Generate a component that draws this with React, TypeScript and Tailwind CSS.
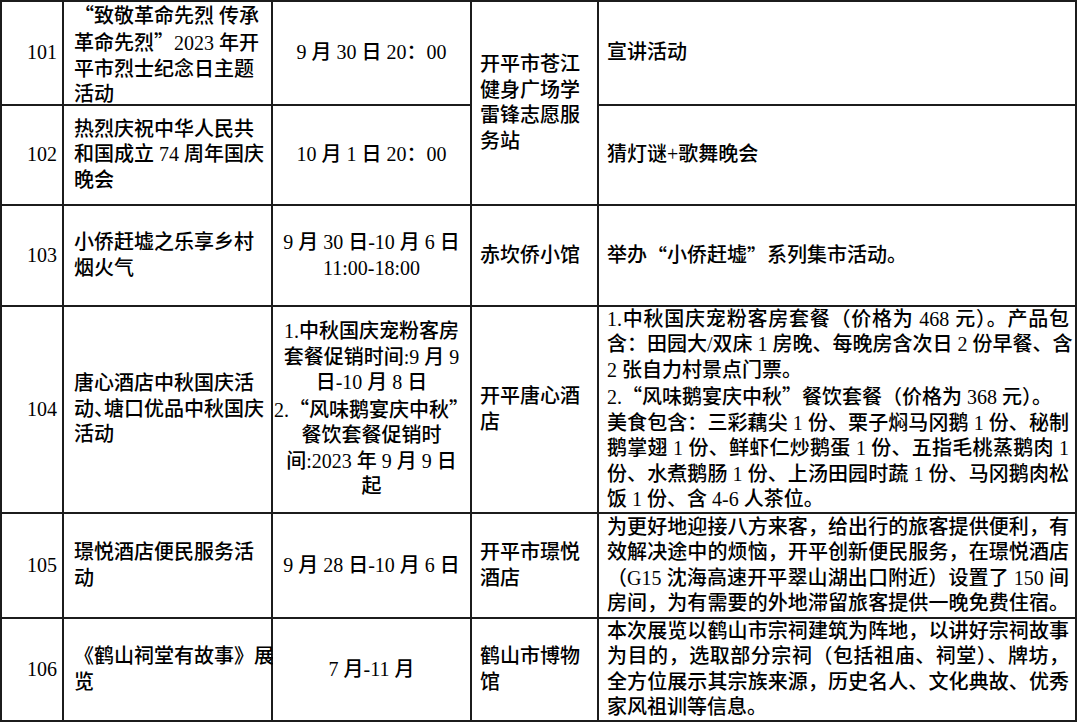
import type { ReactNode } from 'react';
import clsx from 'clsx';

// quotes need the CJK face so they take a full-width box; 、 gets the half-width form
function Txt({ s }: { s: string }) {
  const parts = s.split(/([“”]|、(?=塘))/);
  return (
    <>
      {parts.map((p, i) =>
        p === '“' || p === '”' ? (
          <span key={i} className="font-['Noto_Sans_CJK_SC']">
            {p}
          </span>
        ) : p === '、' ? (
          <span key={i} className="[font-feature-settings:'halt']">
            {p}
          </span>
        ) : (
          p
        ),
      )}
    </>
  );
}

function Lines({
  lines,
  justify = [],
  center = false,
}: {
  lines: string[];
  justify?: number[];
  center?: boolean;
}) {
  return (
    <div className={clsx('w-full', center && 'text-center')}>
      {lines.map((l, i) => (
        <div
          key={i}
          className={clsx(
            'whitespace-nowrap',
            justify.includes(i) && 'whitespace-normal [text-align-last:justify] text-justify',
          )}
        >
          <Txt s={l} />
        </div>
      ))}
    </div>
  );
}

function Cell({ children, className }: { children?: ReactNode; className?: string }) {
  return <div className={clsx('flex items-center bg-white', className)}>{children}</div>;
}

const NUM = 'justify-end pr-[5px]';
const TITLE = 'pl-[10px] pr-[2px]';
const TIME = 'justify-center';
const LOC = 'pl-[8px]';
const DESC = 'pl-[8px] pr-[6px]';

export default function App() {
  return (
    <div className="h-[723px] w-[1080px] overflow-hidden bg-white font-['Liberation_Serif','Noto_Sans_CJK_SC',serif] text-[20px] font-medium leading-[25.5px] text-black">
      <div className="grid w-[1077px] grid-cols-[60px_207px_197px_125px_476px] grid-rows-[102px_98px_99px_205px_103px_101px] gap-[2px] bg-[#1c1c1c] p-[2px]">
        {/* 101 */}
        <Cell className={NUM}>101</Cell>
        <Cell className={clsx(TITLE, 'pt-[3px]')}>
          <Lines lines={['“致敬革命先烈 传承', '革命先烈”2023 年开', '平市烈士纪念日主题', '活动']} />
        </Cell>
        <Cell className={TIME}>9 月 30 日 20：00</Cell>
        <Cell className={clsx(LOC, 'row-span-2')}>
          <Lines lines={['开平市苍江', '健身广场学', '雷锋志愿服', '务站']} />
        </Cell>
        <Cell className={DESC}>宣讲活动</Cell>

        {/* 102 */}
        <Cell className={NUM}>102</Cell>
        <Cell className={TITLE}>
          <Lines lines={['热烈庆祝中华人民共', '和国成立 74 周年国庆', '晚会']} />
        </Cell>
        <Cell className={TIME}>10 月 1 日 20：00</Cell>
        <Cell className={DESC}>猜灯谜+歌舞晚会</Cell>

        {/* 103 */}
        <Cell className={NUM}>103</Cell>
        <Cell className={TITLE}>
          <Lines lines={['小侨赶墟之乐享乡村', '烟火气']} />
        </Cell>
        <Cell className={TIME}>
          <Lines center lines={['9 月 30 日-10 月 6 日', '11:00-18:00']} />
        </Cell>
        <Cell className={LOC}>赤坎侨小馆</Cell>
        <Cell className={DESC}>
          <Txt s="举办“小侨赶墟”系列集市活动。" />
        </Cell>

        {/* 104 */}
        <Cell className={NUM}>104</Cell>
        <Cell className={TITLE}>
          <Lines lines={['唐心酒店中秋国庆活', '动、塘口优品中秋国庆', '活动']} />
        </Cell>
        <Cell className={TIME}>
          <Lines
            center
            lines={[
              '1.中秋国庆宠粉客房',
              '套餐促销时间:9 月 9',
              '日-10 月 8 日',
              '2.“风味鹅宴庆中秋”',
              '餐饮套餐促销时',
              '间:2023 年 9 月 9 日',
              '起',
            ]}
          />
        </Cell>
        <Cell className={LOC}>
          <Lines lines={['开平唐心酒', '店']} />
        </Cell>
        <Cell className={DESC}>
          <Lines
            justify={[0, 1, 4, 5, 6]}
            lines={[
              '1.中秋国庆宠粉客房套餐（价格为 468 元）。产品包',
              '含：田园大/双床 1 房晚、每晚房含次日 2 份早餐、含',
              '2 张自力村景点门票。',
              '2.“风味鹅宴庆中秋”餐饮套餐（价格为 368 元）。',
              '美食包含：三彩藕尖 1 份、栗子焖马冈鹅 1 份、秘制',
              '鹅掌翅 1 份、鲜虾仁炒鹅蛋 1 份、五指毛桃蒸鹅肉 1',
              '份、水煮鹅肠 1 份、上汤田园时蔬 1 份、马冈鹅肉松',
              '饭 1 份、含 4-6 人茶位。',
            ]}
          />
        </Cell>

        {/* 105 */}
        <Cell className={NUM}>105</Cell>
        <Cell className={TITLE}>
          <Lines lines={['璟悦酒店便民服务活', '动']} />
        </Cell>
        <Cell className={TIME}>9 月 28 日-10 月 6 日</Cell>
        <Cell className={LOC}>
          <Lines lines={['开平市璟悦', '酒店']} />
        </Cell>
        <Cell className={DESC}>
          <Lines
            justify={[0, 1, 2, 3]}
            lines={[
              '为更好地迎接八方来客，给出行的旅客提供便利，有',
              '效解决途中的烦恼，开平创新便民服务，在璟悦酒店',
              '（G15 沈海高速开平翠山湖出口附近）设置了 150 间',
              '房间，为有需要的外地滞留旅客提供一晚免费住宿。',
            ]}
          />
        </Cell>

        {/* 106 */}
        <Cell className={NUM}>106</Cell>
        <Cell className={TITLE}>
          <Lines lines={['《鹤山祠堂有故事》展', '览']} />
        </Cell>
        <Cell className={TIME}>7 月-11 月</Cell>
        <Cell className={LOC}>
          <Lines lines={['鹤山市博物', '馆']} />
        </Cell>
        <Cell className={DESC}>
          <Lines
            justify={[0, 1, 2]}
            lines={[
              '本次展览以鹤山市宗祠建筑为阵地，以讲好宗祠故事',
              '为目的，选取部分宗祠（包括祖庙、祠堂）、牌坊，',
              '全方位展示其宗族来源，历史名人、文化典故、优秀',
              '家风祖训等信息。',
            ]}
          />
        </Cell>
      </div>
    </div>
  );
}
